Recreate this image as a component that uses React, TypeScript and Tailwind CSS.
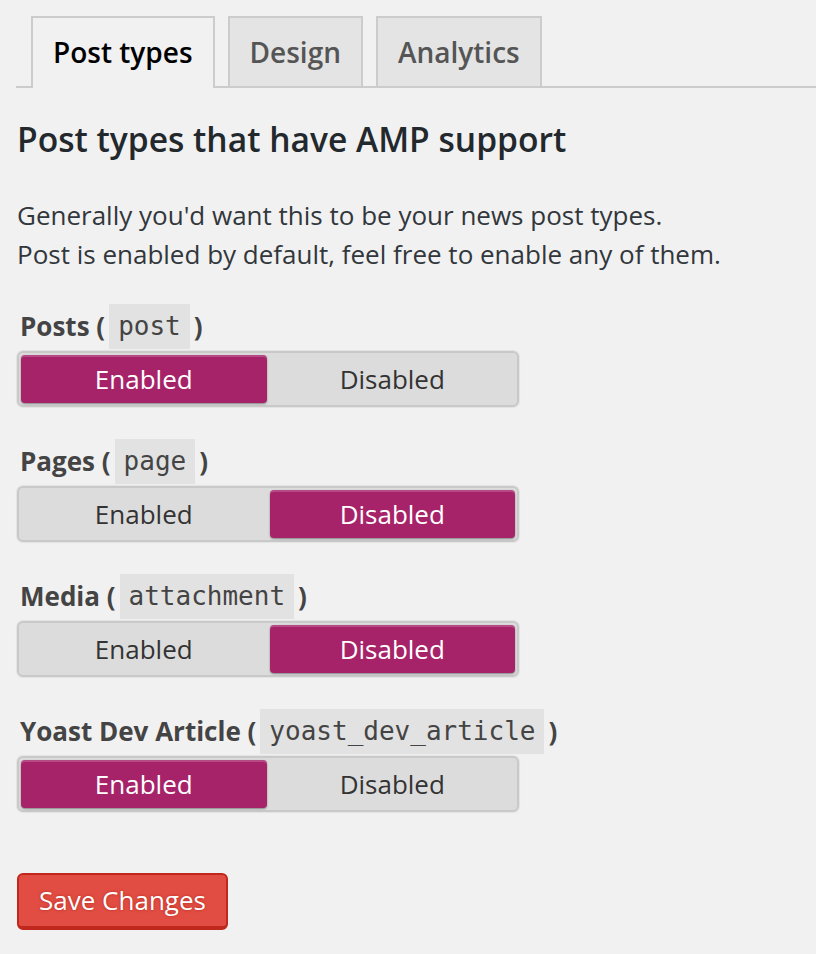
import { useState } from 'react';

const postTypes = [
  { label: 'Posts', slug: 'post', enabled: true },
  { label: 'Pages', slug: 'page', enabled: false },
  { label: 'Media', slug: 'attachment', enabled: false },
  { label: 'Yoast Dev Article', slug: 'yoast_dev_article', enabled: true },
];

function Toggle({ on, onChange }: { on: boolean; onChange: (v: boolean) => void }) {
  const seg = 'flex-1 flex items-center justify-center rounded-[4px] text-[26px] leading-none';
  const active =
    'bg-[#a62369] text-white shadow-[inset_0_2px_0_rgba(255,255,255,0.18),0_1px_2px_rgba(0,0,0,0.4)]';
  const idle = 'text-[#333]';
  return (
    <div className="w-[502px] h-[56px] rounded-[6px] bg-[#dcdcdc] border-2 border-[#c9c9c9] shadow-[0_0_1px_1px_rgba(0,0,0,0.06)] p-[2px] gap-[3px] flex">
      <button className={`${seg} ${on ? active : idle}`} onClick={() => onChange(true)}>
        Enabled
      </button>
      <button className={`${seg} ${!on ? active : idle}`} onClick={() => onChange(false)}>
        Disabled
      </button>
    </div>
  );
}

export default function App() {
  const [state, setState] = useState(postTypes.map((p) => p.enabled));

  return (
    <div className="w-[816px] min-h-[954px] bg-[#f1f1f1] font-['Open_Sans',sans-serif] text-[#444]">
      {/* Tabs */}
      <div className="pt-[16px] pl-[16px]">
        <div className="flex gap-[13px] pl-[15px] border-b-2 border-[#ccc]">
          {['Post types', 'Design', 'Analytics'].map((t, i) => (
            <div
              key={t}
              className={`-mb-[2px] px-[20px] flex items-center border-2 border-[#ccc] border-b-0 text-[28px] font-semibold ${
                i === 0 ? 'bg-[#f1f1f1] text-black h-[72px] pb-[2px]' : 'bg-[#e4e4e4] text-[#555] h-[70px]'
              }`}
            >
              {t}
            </div>
          ))}
        </div>
      </div>

      <div className="pl-[17px]">
        <h2 className="mt-[29px] text-[33.6px] font-semibold text-[#23282d] leading-[44px]">
          Post types that have AMP support
        </h2>
        <p className="mt-[35px] text-[26px] leading-[39px] text-[#32373c]">
          Generally you'd want this to be your news post types.
          <br />
          Post is enabled by default, feel free to enable any of them.
        </p>

        <div className="mt-[30px] flex flex-col gap-[32px]">
          {postTypes.map((p, i) => (
            <div key={p.slug}>
              <div className="pl-[3px] h-[44px] flex items-center text-[26px] font-bold text-[#444]">
                {p.label} (
                <code className="ml-[4px] mr-[4px] bg-[#e2e2e2] px-[9px] py-[3px] font-['DejaVu_Sans_Mono',monospace] font-normal text-[26px] text-[#444]">
                  {p.slug}
                </code>
                )
              </div>
              <div className="mt-[3px]">
                <Toggle
                  on={state[i]}
                  onChange={(v) => setState((s) => s.map((x, j) => (j === i ? v : x)))}
                />
              </div>
            </div>
          ))}
        </div>

        <button className="mt-[61px] h-[57px] w-[211px] rounded-[6px] bg-[#e14d43] border-2 border-[#c0281d] border-b-[4px] text-white text-[26px] [text-shadow:0_0_3px_#b12a1f]">
          Save Changes
        </button>
      </div>
    </div>
  );
}
